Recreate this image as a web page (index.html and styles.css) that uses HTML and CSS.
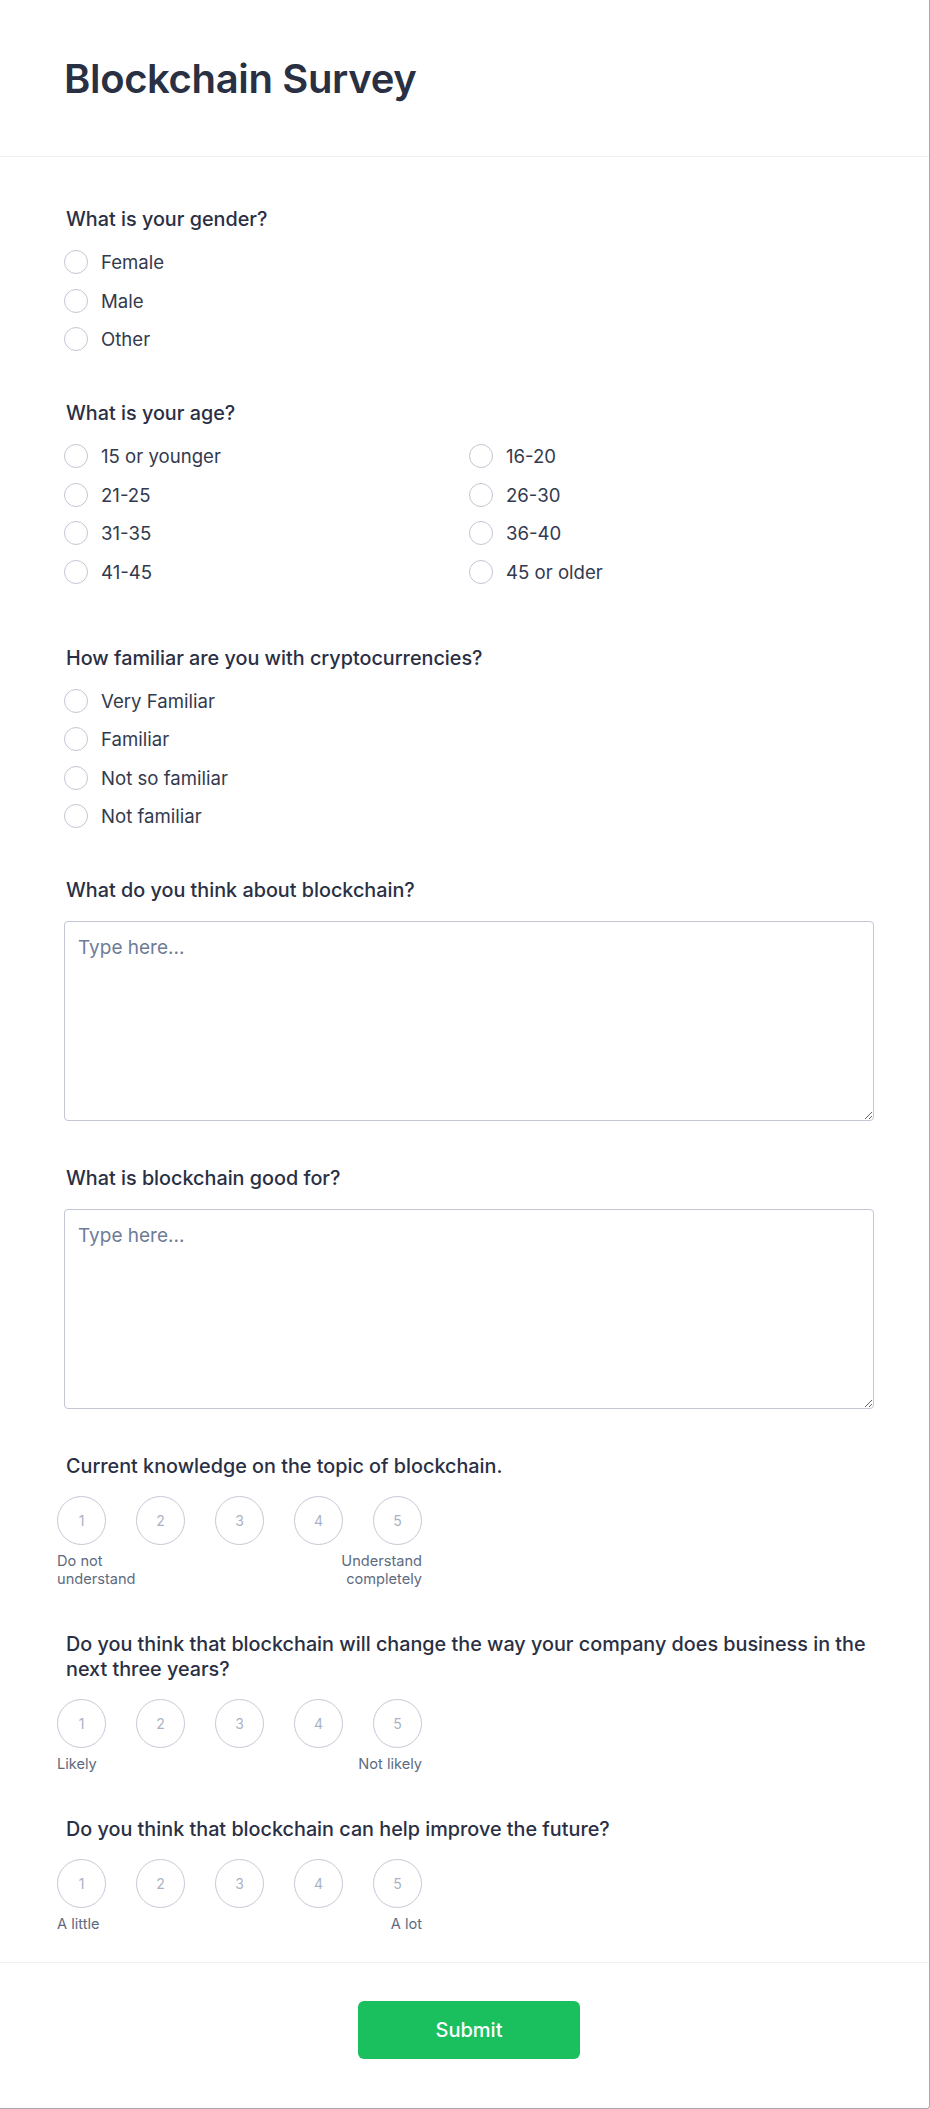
FILE: index.html
```html
<!DOCTYPE html>
<html lang="en">
<head>
<meta charset="utf-8">
<title>Blockchain Survey</title>
<link rel="stylesheet" href="styles.css">
</head>
<body>
<div class="card">
  <header class="card-header">
    <h1 class="title">Blockchain Survey</h1>
  </header>
  <form class="form-body">
    <section class="question q-radio">
      <h2 class="q-title">What is your gender?</h2>
      <div class="options">
        <label class="option"><span class="radio"></span><span>Female</span></label>
        <label class="option"><span class="radio"></span><span>Male</span></label>
        <label class="option"><span class="radio"></span><span>Other</span></label>
      </div>
    </section>

    <section class="question q-grid">
      <h2 class="q-title">What is your age?</h2>
      <div class="options options-grid">
        <label class="option"><span class="radio"></span><span>15 or younger</span></label>
        <label class="option"><span class="radio"></span><span>16-20</span></label>
        <label class="option"><span class="radio"></span><span>21-25</span></label>
        <label class="option"><span class="radio"></span><span>26-30</span></label>
        <label class="option"><span class="radio"></span><span>31-35</span></label>
        <label class="option"><span class="radio"></span><span>36-40</span></label>
        <label class="option"><span class="radio"></span><span>41-45</span></label>
        <label class="option"><span class="radio"></span><span>45 or older</span></label>
      </div>
    </section>

    <section class="question q-radio">
      <h2 class="q-title">How familiar are you with cryptocurrencies?</h2>
      <div class="options">
        <label class="option"><span class="radio"></span><span>Very Familiar</span></label>
        <label class="option"><span class="radio"></span><span>Familiar</span></label>
        <label class="option"><span class="radio"></span><span>Not so familiar</span></label>
        <label class="option"><span class="radio"></span><span>Not familiar</span></label>
      </div>
    </section>

    <section class="question q-text">
      <h2 class="q-title">What do you think about blockchain?</h2>
      <textarea class="textarea" placeholder="Type here..."></textarea>
    </section>

    <section class="question q-text">
      <h2 class="q-title">What is blockchain good for?</h2>
      <textarea class="textarea" placeholder="Type here..."></textarea>
    </section>

    <section class="question q-rating">
      <h2 class="q-title">Current knowledge on the topic of blockchain.</h2>
      <div class="rating">
        <div class="scale">
          <span class="circle">1</span><span class="circle">2</span><span class="circle">3</span><span class="circle">4</span><span class="circle">5</span>
        </div>
        <div class="scale-labels">
          <span class="lbl">Do not understand</span>
          <span class="lbl lbl-right">Understand completely</span>
        </div>
      </div>
    </section>

    <section class="question q-rating">
      <h2 class="q-title">Do you think that blockchain will change the way your company does business in the next three years?</h2>
      <div class="rating">
        <div class="scale">
          <span class="circle">1</span><span class="circle">2</span><span class="circle">3</span><span class="circle">4</span><span class="circle">5</span>
        </div>
        <div class="scale-labels">
          <span class="lbl">Likely</span>
          <span class="lbl lbl-right">Not likely</span>
        </div>
      </div>
    </section>

    <section class="question q-last">
      <h2 class="q-title">Do you think that blockchain can help improve the future?</h2>
      <div class="rating">
        <div class="scale">
          <span class="circle">1</span><span class="circle">2</span><span class="circle">3</span><span class="circle">4</span><span class="circle">5</span>
        </div>
        <div class="scale-labels">
          <span class="lbl">A little</span>
          <span class="lbl lbl-right">A lot</span>
        </div>
      </div>
    </section>
  </form>
  <footer class="card-footer">
    <button type="button" class="submit">Submit</button>
  </footer>
</div>
</body>
</html>
```

FILE: styles.css
```css
* { box-sizing: border-box; }

html, body {
  margin: 0;
  padding: 0;
  background: #ffffff;
}

body {
  font-family: Inter, "Noto Sans", "Liberation Sans", sans-serif;
  color: #2b3044;
}

.card {
  width: 930px;
  background: #ffffff;
  border-right: 1px solid #a9a9ad;
  border-bottom: 1px solid #a9a9ad;
  border-bottom-right-radius: 3px;
}

.card-header {
  height: 157px;
  padding: 55px 55px 0 64px;
  border-bottom: 1px solid #f0f0f6;
}

.title {
  margin: 0;
  font-size: 40px;
  line-height: 48px;
  font-weight: 600;
  color: #2a3043;
  letter-spacing: -0.35px;
}

.form-body {
  padding: 50px 55px 29px 64px;
  display: flex;
  flex-direction: column;
}

.question { display: flex; flex-direction: column; }
.q-radio { margin-bottom: 48px; }
.q-grid { margin-bottom: 60px; }
.q-text { margin-bottom: 45px; }
.q-rating { margin-bottom: 44px; }

.q-title {
  margin: 0 0 16px 2px;
  font-size: 19.8px;
  line-height: 25px;
  font-weight: 500;
  color: #2a2f44;
}

.q-text .q-title { margin-bottom: 18px; }
.q-rating .q-title, .q-last .q-title { margin-bottom: 17px; }

.options {
  display: flex;
  flex-direction: column;
  gap: 10.5px;
}

.options-grid {
  display: grid;
  grid-template-columns: 1fr 1fr;
  row-gap: 10.5px;
  column-gap: 0;
}

.option {
  display: flex;
  align-items: center;
  height: 28px;
  gap: 13px;
  font-size: 18.6px;
  color: #333a4e;
}

.radio {
  width: 24px;
  height: 24px;
  flex: none;
  border-radius: 50%;
  border: 1.5px solid #c2c7d4;
  background: #fff;
}

.textarea {
  display: block;
  width: 100%;
  height: 200px;
  margin: 0;
  padding: 12px 13px;
  border: 1px solid #c3c6d4;
  border-radius: 4px;
  font-family: Inter, "Noto Sans", "Liberation Sans", sans-serif;
  font-size: 19px;
  line-height: 27px;
  color: #2a2f44;
  resize: vertical;
  background: #fff;
}

.textarea::placeholder { color: #6e7c97; }

.rating {
  margin-left: -7px;
  width: 365px;
}

.scale {
  display: flex;
  gap: 30px;
}

.circle {
  width: 49px;
  height: 49px;
  flex: none;
  border-radius: 50%;
  border: 1.5px solid #c5c9d6;
  display: flex;
  align-items: center;
  justify-content: center;
  font-size: 14px;
  color: #a9b3c5;
}

.scale-labels {
  display: flex;
  justify-content: space-between;
  align-items: flex-start;
  margin-top: 7px;
}

.lbl {
  max-width: 95px;
  font-size: 14.6px;
  line-height: 18px;
  color: #5e6a80;
}

.lbl-right { text-align: right; }

.card-footer {
  border-top: 1px solid #f0f0f6;
  padding: 38px 55px 49px 64px;
  display: flex;
  justify-content: center;
}

.submit {
  width: 222px;
  height: 58px;
  border: none;
  border-radius: 6px;
  background: #1abf5e;
  color: #ffffff;
  font-family: Inter, "Noto Sans", "Liberation Sans", sans-serif;
  font-size: 20px;
  font-weight: 500;
}
```
